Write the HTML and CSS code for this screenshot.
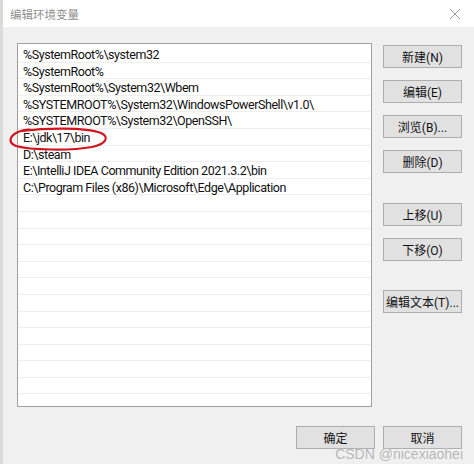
FILE: index.html
```html
<!DOCTYPE html>
<html lang="zh">
<head>
<meta charset="utf-8">
<link rel="stylesheet" href="styles.css">
<title>编辑环境变量</title>
</head>
<body>
<div class="window">
  <div class="titlebar">
    <span class="title">编辑环境变量</span>
    <svg class="close" width="12" height="12" viewBox="0 0 12 12"><path d="M1 1L11 11M11 1L1 11" stroke="#9a9a9a" stroke-width="1" fill="none"/></svg>
  </div>
  <div class="content">
    <div class="main">
      <div class="list">
        <div class="row">%SystemRoot%\system32</div>
        <div class="row">%SystemRoot%</div>
        <div class="row">%SystemRoot%\System32\Wbem</div>
        <div class="row">%SYSTEMROOT%\System32\WindowsPowerShell\v1.0\</div>
        <div class="row">%SYSTEMROOT%\System32\OpenSSH\</div>
        <div class="row">E:\jdk\17\bin</div>
        <div class="row">D:\steam</div>
        <div class="row">E:\IntelliJ IDEA Community Edition 2021.3.2\bin</div>
        <div class="row">C:\Program Files (x86)\Microsoft\Edge\Application</div>
        <div class="row"></div><div class="row"></div><div class="row"></div>
        <div class="row"></div><div class="row"></div><div class="row"></div>
        <div class="row"></div><div class="row"></div><div class="row"></div>
        <div class="row"></div><div class="row"></div><div class="row"></div>
        <div class="row"></div><div class="row"></div>
      </div>
      <div class="side">
        <button class="btn">新建(N)</button>
        <button class="btn">编辑(E)</button>
        <button class="btn">浏览(B)...</button>
        <button class="btn">删除(D)</button>
        <button class="btn gap-lg">上移(U)</button>
        <button class="btn">下移(O)</button>
        <button class="btn gap-lg">编辑文本(T)...</button>
      </div>
    </div>
    <div class="footer">
      <button class="btn">确定</button>
      <button class="btn">取消</button>
    </div>
  </div>
  <svg class="mark" width="474" height="464" viewBox="0 0 474 464">
    <path d="M22 131 C45 128, 85 127, 101 133 C110 137, 106 144, 92 147 C70 151, 30 150, 16 146 C8 143, 9 136, 18 132 C22 130, 28 129, 33 130" stroke="#d2141e" stroke-width="2.2" fill="none" stroke-linecap="round"/>
  </svg>
  <div class="watermark">CSDN @nicexiaohei</div>
</div>
</body>
</html>
```
FILE: styles.css
```css
html, body {
  margin: 0;
  padding: 0;
}
body {
  width: 474px;
  height: 464px;
  overflow: hidden;
  font-family: "Roboto", "Noto Sans CJK SC", sans-serif;
  font-size: 12px;
  color: #000;
}
.window {
  position: relative;
  width: 474px;
  height: 464px;
  background: #f0f0f0;
  border-left: 3px solid #dadada;
  box-sizing: border-box;
}
.titlebar {
  height: 27px;
  background: #fff;
  display: flex;
  align-items: center;
  justify-content: space-between;
  padding: 0 13px 0 7px;
}
.title {
  color: #8f8f8f;
  font-family: "Noto Sans CJK SC", sans-serif;
  font-size: 11.5px;
}
.close {
  display: block;
}
.content {
  padding: 16px 12px 0 14px;
}
.main {
  display: flex;
  gap: 11px;
}
.list {
  width: 355px;
  height: 364px;
  box-sizing: border-box;
  border: 1px solid #a0a0a0;
  background: #fff;
  padding-top: 2px;
  overflow: hidden;
}
.row {
  height: 16.6px;
  box-sizing: border-box;
  border-bottom: 1px solid #efefef;
  padding-left: 5px;
  padding-top: 1px;
  line-height: 16px;
  white-space: nowrap;
  font-size: 12.5px;
  letter-spacing: -0.45px;
  color: #111;
}
.side {
  display: flex;
  flex-direction: column;
  gap: 12px;
  padding-top: 2px;
}
.btn {
  width: 79px;
  height: 23px;
  box-sizing: border-box;
  background: #e1e1e1;
  border: 1px solid #adadad;
  font-family: "Roboto", "Noto Sans CJK SC", sans-serif;
  font-size: 12px;
  color: #111;
  padding: 0;
  margin: 0;
}
.side .gap-lg {
  margin-top: 18px;
}
.side .gap-lg:last-child {
  margin-top: 17px;
}
.footer {
  display: flex;
  justify-content: flex-end;
  gap: 8px;
  margin-top: 19px;
}
.mark {
  position: absolute;
  left: -3px;
  top: 0;
  pointer-events: none;
}
.watermark {
  position: absolute;
  right: 11px;
  top: 447px;
  line-height: 1;
  font-family: "Liberation Sans", sans-serif;
  font-size: 14px;
  color: #b4b4b4;
  text-shadow: 0 0 1px #fff;
}
```
